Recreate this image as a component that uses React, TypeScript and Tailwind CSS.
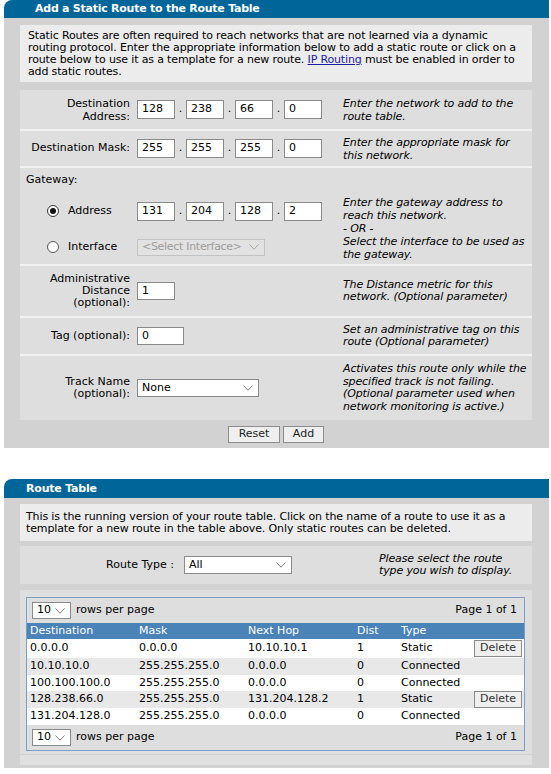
import React from "react";

function Chevron({ color = "#7a7a7a" }: { color?: string }) {
  return (
    <svg width="10" height="6" viewBox="0 0 10 6" className="shrink-0">
      <polyline points="0.5,0.5 5,5.2 9.5,0.5" fill="none" stroke={color} strokeWidth="1" />
    </svg>
  );
}

function Field({ value, className }: { value: string; className: string }) {
  return (
    <div className={`${className} flex items-center border border-[#8a8a8a] bg-white pl-[4px] text-[11px]`}>
      {value}
    </div>
  );
}

function Ip({ parts }: { parts: string[] }) {
  return (
    <div className="flex items-center">
      {parts.map((p, i) => (
        <React.Fragment key={i}>
          {i > 0 && <span className="w-[11px] text-center">.</span>}
          <Field value={p} className="w-[38px] h-[19px]" />
        </React.Fragment>
      ))}
    </div>
  );
}

function Select({ value, className, disabled }: { value: string; className: string; disabled?: boolean }) {
  return (
    <div
      className={`${className} flex items-center justify-between border pl-[4px] pr-[5px] ${
        disabled ? "border-[#c2c2c2] bg-[#e2e2e2] text-[#9c9c9c] tracking-[-0.3px]" : "border-[#8a8a8a] bg-white text-black"
      }`}
    >
      <span>{value}</span>
      <Chevron color={disabled ? "#a8a8a8" : "#7a7a7a"} />
    </div>
  );
}

function Radio({ checked }: { checked?: boolean }) {
  return (
    <div
      className={`w-[12px] h-[12px] rounded-full border bg-white flex items-center justify-center ${
        checked ? "border-[#333333]" : "border-[#555555]"
      }`}
    >
      {checked && <div className="w-[6px] h-[6px] rounded-full bg-[#111111]" />}
    </div>
  );
}

function Btn({ label, className }: { label: string; className: string }) {
  return (
    <div className={`${className} flex items-center justify-center border border-[#8c8c8c] bg-[#efefef] text-[#222222]`}>
      {label}
    </div>
  );
}

const rows = [
  { d: "0.0.0.0", m: "0.0.0.0", n: "10.10.10.1", dist: "1", t: "Static", del: true, bg: "bg-white", h: "h-[19px]" },
  { d: "10.10.10.0", m: "255.255.255.0", n: "0.0.0.0", dist: "0", t: "Connected", del: false, bg: "bg-[#e8e8e8]", h: "h-[17px]" },
  { d: "100.100.100.0", m: "255.255.255.0", n: "0.0.0.0", dist: "0", t: "Connected", del: false, bg: "bg-white", h: "h-[16px]" },
  { d: "128.238.66.0", m: "255.255.255.0", n: "131.204.128.2", dist: "1", t: "Static", del: true, bg: "bg-[#e8e8e8]", h: "h-[17px]" },
  { d: "131.204.128.0", m: "255.255.255.0", n: "0.0.0.0", dist: "0", t: "Connected", del: false, bg: "bg-white", h: "h-[17px]" },
];

function PagerRow() {
  return (
    <div className="h-[25px] flex items-center justify-between pl-[5px] pr-[7px]">
      <div className="flex items-center">
        <Select value="10" className="w-[39px] h-[17px]" />
        <span className="ml-[5px]">rows per page</span>
      </div>
      <span>Page 1 of 1</span>
    </div>
  );
}

export default function App() {
  return (
    <div className="w-[551px] h-[774px] bg-white font-['DejaVu_Sans',sans-serif] text-[11px] text-black overflow-hidden">
      {/* Add a Static Route panel */}
      <div className="ml-[4px] w-[545px]">
        <div className="h-[18px] bg-[#006699] rounded-tl-[8px] pl-[31px] text-white font-bold leading-[18px] whitespace-nowrap tracking-[-0.25px]">
          Add a Static Route to the Route Table
        </div>
        <div className="bg-[#d2d2d2] pl-[16px] pr-[17px] pt-[7px] pb-[5px]">
          <div className="bg-[#ececec] pl-[8px] pt-[5px] pb-[4px] leading-[12px] whitespace-nowrap tracking-[-0.15px]">
            Static Routes are often required to reach networks that are not learned via a dynamic
            <br />
            routing protocol. Enter the appropriate information below to add a static route or click on a
            <br />
            route below to use it as a template for a new route.{" "}
            <span className="text-[#1a1aa6] underline">IP Routing</span> must be enabled in order to
            <br />
            add static routes.
          </div>

          <div className="mt-[8px] flex flex-col gap-[2px] bg-[#f1f1f1]">
            {/* Destination Address */}
            <div className="flex h-[39px] items-center bg-[#dedede]">
              <div className="w-[114px] pr-[4px] text-right leading-[13px]">
                Destination
                <br />
                Address:
              </div>
              <div className="w-[205px] pl-[3px]">
                <Ip parts={["128", "238", "66", "0"]} />
              </div>
              <div className="flex-1 pl-[4px] italic leading-[13px] whitespace-nowrap tracking-[-0.13px]">
                Enter the network to add to the
                <br />
                route table.
              </div>
            </div>

            {/* Destination Mask */}
            <div className="flex h-[35px] items-center bg-[#dedede]">
              <div className="w-[114px] pr-[4px] text-right whitespace-nowrap">Destination Mask:</div>
              <div className="w-[205px] pl-[3px]">
                <Ip parts={["255", "255", "255", "0"]} />
              </div>
              <div className="flex-1 pl-[4px] italic leading-[13px] whitespace-nowrap tracking-[-0.13px]">
                Enter the appropriate mask for
                <br />
                this network.
              </div>
            </div>

            {/* Gateway */}
            <div className="h-[96px] flex flex-col bg-[#dedede]">
              <div className="h-[24px] pl-[6px] flex items-center">Gateway:</div>
              <div className="flex flex-1 items-center">
                <div className="w-[319px] flex flex-col">
                  <div className="h-[38px] flex items-center">
                    <div className="w-[114px] flex items-center pl-[27px] gap-[9px]">
                      <Radio checked />
                      <span>Address</span>
                    </div>
                    <div className="pl-[3px]">
                      <Ip parts={["131", "204", "128", "2"]} />
                    </div>
                  </div>
                  <div className="h-[34px] flex items-center">
                    <div className="w-[114px] flex items-center pl-[27px] gap-[9px]">
                      <Radio />
                      <span>Interface</span>
                    </div>
                    <div className="pl-[3px]">
                      <Select value="<Select Interface>" className="w-[128px] h-[17px]" disabled />
                    </div>
                  </div>
                </div>
                <div className="flex-1 pl-[4px] italic leading-[13px] whitespace-nowrap tracking-[-0.13px]">
                  Enter the gateway address to
                  <br />
                  reach this network.
                  <br />
                  - OR -
                  <br />
                  Select the interface to be used as
                  <br />
                  the gateway.
                </div>
              </div>
            </div>

            {/* Administrative Distance */}
            <div className="flex h-[50px] items-center bg-[#dedede]">
              <div className="w-[114px] pr-[4px] text-right leading-[12px]">
                Administrative
                <br />
                Distance
                <br />
                (optional):
              </div>
              <div className="w-[205px] pl-[3px]">
                <Field value="1" className="w-[38px] h-[18px]" />
              </div>
              <div className="flex-1 pl-[4px] italic leading-[12px] whitespace-nowrap tracking-[-0.13px]">
                The Distance metric for this
                <br />
                network. (Optional parameter)
              </div>
            </div>

            {/* Tag */}
            <div className="flex h-[36px] items-center bg-[#dedede]">
              <div className="w-[114px] pr-[4px] text-right whitespace-nowrap">Tag (optional):</div>
              <div className="w-[205px] pl-[3px]">
                <Field value="0" className="w-[47px] h-[18px]" />
              </div>
              <div className="flex-1 pl-[4px] italic leading-[12px] whitespace-nowrap tracking-[-0.13px]">
                Set an administrative tag on this
                <br />
                route (Optional parameter)
              </div>
            </div>

            {/* Track */}
            <div className="flex h-[64px] items-center bg-[#dedede]">
              <div className="w-[114px] pr-[4px] text-right leading-[12px]">
                Track Name
                <br />
                (optional):
              </div>
              <div className="w-[205px] pl-[3px]">
                <Select value="None" className="w-[122px] h-[18px]" />
              </div>
              <div className="flex-1 pl-[4px] italic leading-[12.5px] whitespace-nowrap tracking-[-0.13px]">
                Activates this route only while the
                <br />
                specified track is not failing.
                <br />
                (Optional parameter used when
                <br />
                network monitoring is active.)
              </div>
            </div>
          </div>

          <div className="mt-[6px] flex justify-center gap-[3px]">
            <Btn label="Reset" className="w-[52px] h-[17px]" />
            <Btn label="Add" className="w-[41px] h-[17px]" />
          </div>
        </div>
      </div>

      {/* Route Table panel */}
      <div className="ml-[4px] w-[545px] mt-[31px]">
        <div className="h-[19px] bg-[#006699] rounded-tl-[8px] pl-[22px] text-white font-bold leading-[19px] tracking-[-0.2px]">
          Route Table
        </div>
        <div className="bg-[#d2d2d2] pl-[16px] pr-[17px] pt-[6px] pb-[3px]">
          <div className="bg-[#ececec] pl-[6px] pt-[7px] pb-[6px] leading-[12px] whitespace-nowrap tracking-[-0.12px]">
            This is the running version of your route table. Click on the name of a route to use it as a
            <br />
            template for a new route in the table above. Only static routes can be deleted.
          </div>

          <div className="mt-[5px] h-[38px] bg-[#dedede] flex items-center">
            <div className="w-[158px] pr-[4px] text-right whitespace-nowrap">Route Type :</div>
            <Select value="All" className="ml-[6px] w-[108px] h-[18px]" />
            <div className="ml-[87px] italic leading-[12px] whitespace-nowrap tracking-[-0.13px]">
              Please select the route
              <br />
              type you wish to display.
            </div>
          </div>

          <div className="mt-[6px] bg-[#dedede] pt-[7px] pl-[6px] pr-[7px] pb-[3px]">
            <div className="border border-[#7f9fc2]">
              <PagerRow />
              <div className="grid grid-cols-[109px_109px_109px_44px_72px_1fr] h-[16px] items-center bg-[#4a83b7] text-white">
                <div className="pl-[3px]">Destination</div>
                <div className="pl-[3px]">Mask</div>
                <div className="pl-[3px]">Next Hop</div>
                <div className="pl-[3px]">Dist</div>
                <div className="pl-[3px]">Type</div>
                <div />
              </div>
              {rows.map((r) => (
                <div
                  key={r.d}
                  className={`grid grid-cols-[109px_109px_109px_44px_72px_1fr] items-center ${r.h} ${r.bg}`}
                >
                  <div className="pl-[3px]">{r.d}</div>
                  <div className="pl-[3px]">{r.m}</div>
                  <div className="pl-[3px]">{r.n}</div>
                  <div className="pl-[3px]">{r.dist}</div>
                  <div className="pl-[3px]">{r.t}</div>
                  <div className="pl-[4px]">
                    {r.del && (
                      <div className="w-[48px] h-[17px] flex items-center justify-center border border-[#8a8a8a] bg-[#efefef] text-[#333333]">
                        Delete
                      </div>
                    )}
                  </div>
                </div>
              ))}
              <PagerRow />
            </div>
          </div>

          <div className="mt-[1px] h-[10px] bg-[#e0e0e0]" />
        </div>
      </div>
    </div>
  );
}
